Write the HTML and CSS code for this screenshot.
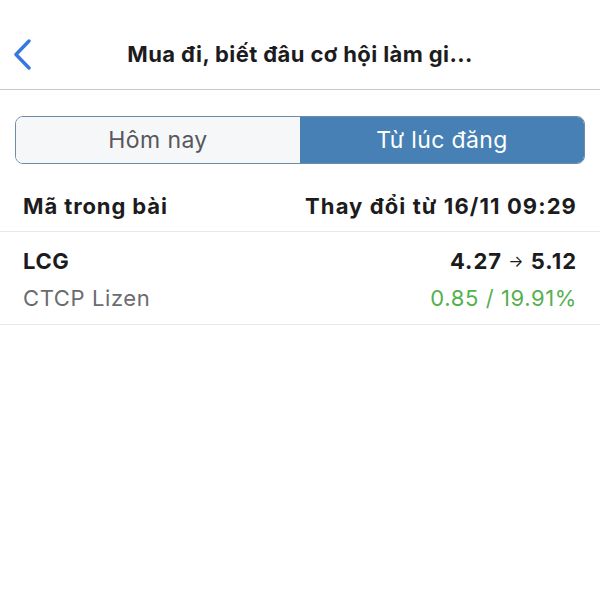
FILE: index.html
```html
<!DOCTYPE html>
<html>
<head>
	<meta charset='utf-8'>
	<title>Mua đi</title>
	<link rel="stylesheet" href="styles.css">
</head>
<body>

	<div class="topbar">
		<a class="back" href="#">
			<svg width="20" height="32" viewBox="0 0 20 32">
				<path d="M17 3 L4 16.5 L17 30" fill="none" stroke="#3478e0" stroke-width="3.4" stroke-linecap="round" stroke-linejoin="round"/>
			</svg>
		</a>
		<div class="title">Mua đi, biết đâu cơ hội làm gi...</div>
	</div>

	<div class="segment">
		<div class="seg">Hôm nay</div>
		<div class="seg active">Từ lúc đăng</div>
	</div>

	<div class="row head">
		<div class="cell">Mã trong bài</div>
		<div class="cell right">Thay đổi từ 16/11 09:29</div>
	</div>

	<div class="row item">
		<div class="cell">
			<div class="code">LCG</div>
			<div class="name">CTCP Lizen</div>
		</div>
		<div class="cell right">
			<div class="price">4.27 <span class="arrow">→</span> 5.12</div>
			<div class="change">0.85 / 19.91%</div>
		</div>
	</div>

</body>
</html>
```

FILE: styles.css
```css
body{
	margin: 0;
	background: #fff;
	font-family: Inter, "Noto Sans", sans-serif;
	color: #1c1c1e;
}
.topbar{
	position: relative;
	height: 90px;
	box-sizing: border-box;
	padding-top: 18px;
	display: flex;
	align-items: center;
	justify-content: center;
	border-bottom: 1px solid #c9c9cc;
}
.back{
	position: absolute;
	left: 12px;
	top: 38px;
	display: block;
	height: 32px;
}
.title{
	font-size: 22px;
	font-weight: 700;
	letter-spacing: 0.4px;
}
.segment{
	display: flex;
	margin: 26px 15px 0;
	height: 48px;
	box-sizing: border-box;
	border: 1px solid #6f8ca6;
	border-radius: 8px;
	overflow: hidden;
}
.seg{
	flex: 1;
	display: flex;
	align-items: center;
	justify-content: center;
	font-size: 23px;
	letter-spacing: 0.4px;
	color: #56585c;
	background: #f6f7f8;
}
.seg.active{
	background: #4680b4;
	color: #fff;
}
.row{
	display: flex;
	justify-content: space-between;
	padding: 0 23px;
	border-bottom: 1px solid #e8e8ea;
}
.head{
	height: 68px;
	box-sizing: border-box;
	align-items: flex-end;
	padding-bottom: 12px;
	font-size: 22px;
	font-weight: 700;
	letter-spacing: 0.9px;
	line-height: 26px;
}
.head .right{
	letter-spacing: 1.1px;
}
.item{
	padding-top: 16px;
	padding-bottom: 13px;
	font-size: 22px;
	letter-spacing: 0.6px;
	line-height: 26px;
}
.right{
	text-align: right;
}
.code, .price{
	font-weight: 700;
	margin-bottom: 11px;
}
.price{
	letter-spacing: 1px;
}
.arrow{
	font-size: 16px;
	font-weight: 400;
	vertical-align: 2px;
}
.name{
	color: #6b6b70;
}
.change{
	color: #55b04f;
}
```
